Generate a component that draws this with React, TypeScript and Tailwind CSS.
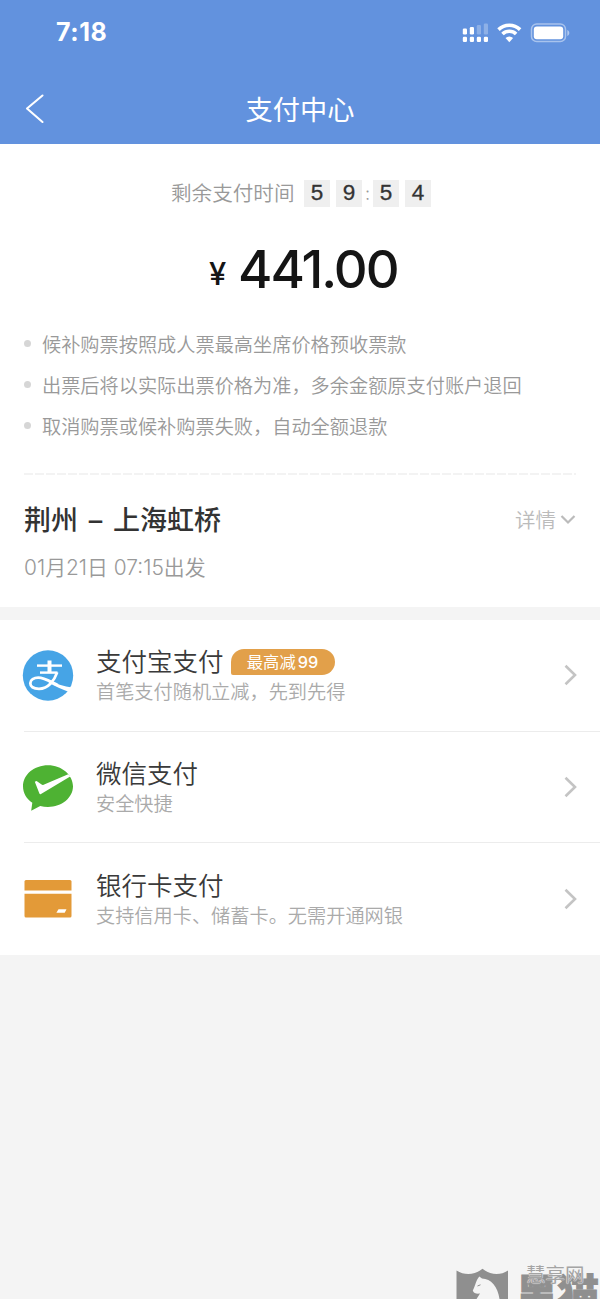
import React from 'react';

const NOTES = [
  '候补购票按照成人票最高坐席价格预收票款',
  '出票后将以实际出票价格为准，多余金额原支付账户退回',
  '取消购票或候补购票失败，自动全额退款',
];

function StatusIcons() {
  return (
    <svg width="110" height="24" viewBox="0 0 110 24" fill="#fff">
      {/* dual sim signal */}
      <rect x="2.8" y="7.5" width="4.2" height="6" rx="1.2" />
      <rect x="9.8" y="6" width="4.2" height="7.5" rx="1.2" />
      <rect x="16.8" y="4" width="4.2" height="9.5" rx="1.2" opacity="0.28" />
      <rect x="23.8" y="2.5" width="4.2" height="11" rx="1.2" opacity="0.28" />
      <rect x="2.8" y="15.8" width="4.2" height="5.2" rx="1.2" />
      <rect x="9.8" y="15.8" width="4.2" height="5.2" rx="1.2" />
      <rect x="16.8" y="15.8" width="4.2" height="5.2" rx="1.2" />
      <rect x="23.8" y="15.8" width="4.2" height="5.2" rx="1.2" />
      {/* wifi */}
      <g fill="none" stroke="#fff" strokeWidth="3.6">
        <path d="M38.5 8.6a15.6 15.6 0 0 1 21.6 0" />
        <path d="M42.5 13a9.7 9.7 0 0 1 13.6 0" />
      </g>
      <path d="M45.5 17a5.4 5.4 0 0 1 7.6 0L49.3 21.2z" />
      {/* battery */}
      <rect x="71.5" y="3" width="34" height="17.6" rx="5.2" fill="none" stroke="#fff" strokeWidth="1.5" opacity="0.45" />
      <rect x="73.8" y="5.5" width="29.4" height="12.8" rx="3" />
      <path d="M107.3 9v6c1.3-.5 2-1.7 2-3s-.7-2.5-2-3z" opacity="0.5" />
    </svg>
  );
}

function AlipayIcon() {
  return (
    <svg width="52" height="52" viewBox="0 0 52 52">
      <circle cx="26" cy="26.5" r="25.2" fill="#46a4e6" />
      <g fill="none" stroke="#fff" strokeWidth="2.4">
        <path d="M27.5 11.5V24" strokeWidth="4" />
        <path d="M15 16.6H40" />
        <path d="M18 23.6H35.5" />
        <path
          d="M35.2 23.4C32.5 31 26.5 39.8 17 39.8C11.2 39.8 8.3 37.5 8.3 34.2C8.3 30.8 12 28.7 16.2 28.7C23 28.7 30 33.8 36 36.3"
          strokeWidth="2.8"
        />
      </g>
      <path d="M28 32.3C35 35.3 42 37.4 50 38.6C49.4 40.5 48.6 42 47.7 43.3C40 40.5 33 37.2 26.5 33.5z" fill="#fff" />
    </svg>
  );
}

function WechatPayIcon() {
  return (
    <svg width="52" height="52" viewBox="0 0 52 52">
      <path
        d="M26 4.2C12.2 4.2 1 13.5 1 25.3c0 7 3.6 12.6 9.3 16.5l-1.1 8 9-4.9c2.5.7 5.1 1.1 7.8 1.1 13.8 0 25-9.3 25-20.7S39.8 4.2 26 4.2z"
        fill="#4eb233"
      />
      <path d="M12.8 20.8l1.8-.8 5 3.6c.7.4 1.3.4 2 .1L46.2 13.2l2 2.4L19 33c-.8.4-1.3.1-1.6-.6z" fill="#fff" />
    </svg>
  );
}

function BankCardIcon() {
  return (
    <svg width="52" height="52" viewBox="0 0 52 52" fill="#e39a38">
      <path d="M4 7h44a1.500 1.500 0 0 1 1.500 1.500v9h-47v-9A1.500 1.500 0 0 1 4 7z" />
      <path d="M2.500 20.800h47v22.200a1.500 1.500 0 0 1-1.500 1.500H4a1.500 1.500 0 0 1-1.500-1.500z" />
      <path d="M36.500 36.200h8l-1.800 3.500h-8.300z" fill="#fff" />
    </svg>
  );
}

interface PayMethodProps {
  icon: React.ReactNode;
  title: string;
  desc: string;
  badge?: React.ReactNode;
  divider?: boolean;
}

function PayMethod({ icon, title, desc, badge, divider = true }: PayMethodProps) {
  return (
    <div className={`ml-6 flex h-[111.5px] items-center ${divider ? 'border-b border-[#ececec]' : ''}`}>
      <div className="-ml-0.5 w-[52px] shrink-0">{icon}</div>
      <div className="ml-[22px] flex-1">
        <div className="flex items-center gap-[7px] pt-0.5">
          <span className="text-[25.5px] leading-[32px] font-[350] text-[#3a3a3a]">{title}</span>
          {badge}
        </div>
        <div className="text-[19.2px] leading-[28px] font-[350] text-[#aaa]">{desc}</div>
      </div>
      <svg className="mr-[22px]" width="15" height="22" viewBox="0 0 15 22" fill="none" stroke="#c4c4c4" strokeWidth="2.6">
        <path d="M2.500 1.800L12 11L2.500 20.200" />
      </svg>
    </div>
  );
}

function Digit({ value }: { value: string }) {
  return (
    <span className="flex h-[27px] w-[26px] items-center justify-center bg-[#efefef] font-['Liberation_Sans',sans-serif] text-[22.5px] text-[#333] [-webkit-text-stroke:0.3px_#333]">
      {value}
    </span>
  );
}

export default function App() {
  return (
    <div className="relative flex h-[1299px] w-[600px] flex-col overflow-hidden bg-[#f4f4f4] font-['Inter','Noto_Sans_CJK_SC',sans-serif]">
      <header className="h-[144px] shrink-0 bg-[#6292de] text-white">
        <div className="flex h-[66px] items-center justify-between pr-[30px] pl-14">
          <span className="text-[25px] font-bold tracking-[0.6px]">7:18</span>
          <StatusIcons />
        </div>
        <div className="grid h-[86px] grid-cols-[100px_1fr_100px] items-center">
          <svg className="ml-6" width="22" height="32" viewBox="0 0 22 32" fill="none" stroke="#fff" strokeWidth="2.1" strokeLinecap="round" strokeLinejoin="round">
            <path d="M18.500 2.500L3 15.500L18.500 29" />
          </svg>
          <h1 className="pt-[3px] text-center text-[27.2px] leading-[40px]">支付中心</h1>
        </div>
      </header>

      <section className="h-[463px] shrink-0 bg-white px-6 pt-[35px]">
        <div className="flex h-[28px] items-center pl-[147px]">
          <span className="w-[133px] pt-0.5 text-[20.6px] font-[350] text-[#999]">剩余支付时间</span>
          <Digit value="5" />
          <span className="w-1.5" />
          <Digit value="9" />
          <span className="w-[11px] text-center text-[18px] font-light text-[#999]">:</span>
          <Digit value="5" />
          <span className="w-1.5" />
          <Digit value="4" />
        </div>

        <div className="mt-[29px] flex h-[66px] items-baseline pl-[185px] text-[#151515]">
          <span className="w-[29px] pb-[3px] text-[31px] font-medium [align-self:last_baseline]">
            <span className="relative -top-[2px]">¥</span>
          </span>
          <span className="text-[52.5px] leading-[66px] font-[450] tracking-[-2px]">441.00</span>
        </div>

        <ul className="mt-[21px]">
          {NOTES.map((note) => (
            <li key={note} className="flex h-[41px] items-center text-[19.2px] font-[350] text-[#999]">
              <span className="mr-[11px] h-[7px] w-[7px] rounded-full bg-[#d6d6d6]" />
              <span className="pt-[3px]">{note}</span>
            </li>
          ))}
        </ul>

        <svg className="mt-[27px] block" width="552" height="2" viewBox="0 0 552 2">
          <path d="M0 1H552" stroke="#e8e8e8" strokeWidth="1.2" strokeDasharray="9 2" />
        </svg>

        <div className="mt-[24px] flex h-[42px] items-center justify-between">
          <h2 className="pt-[3px] text-[27px] font-medium text-[#333]">
            荆州<span className="mx-[3.5px]"> – </span>上海虹桥
          </h2>
          <span className="flex items-center gap-1 text-[20.5px] font-[350] text-[#bbb]">
            <span className="pt-0.5">详情</span>
            <svg width="16" height="12" viewBox="0 0 16 12" fill="none" stroke="#bbb" strokeWidth="2.2">
              <path d="M1.500 2L8 8.500L14.500 2" />
            </svg>
          </span>
        </div>
        <p className="mt-[11px] text-[20.9px] leading-[32px] font-[350] text-[#999]">01月21日 07:15出发</p>
      </section>

      <section className="mt-[13px] shrink-0 bg-white">
        <PayMethod
          icon={<AlipayIcon />}
          title="支付宝支付"
          desc="首笔支付随机立减，先到先得"
          badge={
            <span className="flex h-[26px] w-[104px] items-center justify-center rounded-t-[13px] rounded-br-[13px] rounded-bl-[2px] bg-[#e2a04a] text-[16.3px] text-white">
              最高减<span className="ml-0.5 font-medium">99</span>
            </span>
          }
        />
        <PayMethod icon={<WechatPayIcon />} title="微信支付" desc="安全快捷" />
        <PayMethod icon={<BankCardIcon />} title="银行卡支付" desc="支持信用卡、储蓄卡。无需开通网银" divider={false} />
      </section>

      {/* corner watermark */}
      <div className="absolute top-[1262px] left-[456px] h-[37px] w-[144px] overflow-hidden">
        <svg className="absolute top-[6px] left-0" width="53" height="31" viewBox="0 0 53 31">
          <path d="M.5 2.500C9 8 19 7 26.500.700C34 7 44 8 52 2.500V31H.500z" fill="#8f8f8f" />
          <path d="M20.500 31L24 25.500C21 26 17.500 25.500 16.800 22.500C19 19 19.500 13 23.300 8.500L26 10.500C35 10.500 42 19 43.500 31z" fill="#f4f4f4" />
          <path d="M21.500 18L24.500 16.800" stroke="#8f8f8f" />
        </svg>
        <span className="absolute top-[9px] left-[60px] text-[41.5px] leading-[48px] font-black whitespace-nowrap text-[#8f8f8f] [-webkit-text-stroke:1px_#8f8f8f]">黑猫</span>
        <span className="absolute top-px left-[70px] text-[19.5px] leading-[24px] whitespace-nowrap text-[#a4a4a4] [text-shadow:0_0_1px_#f4f4f4,0_0_1px_#f4f4f4]">慧享网</span>
      </div>
    </div>
  );
}
